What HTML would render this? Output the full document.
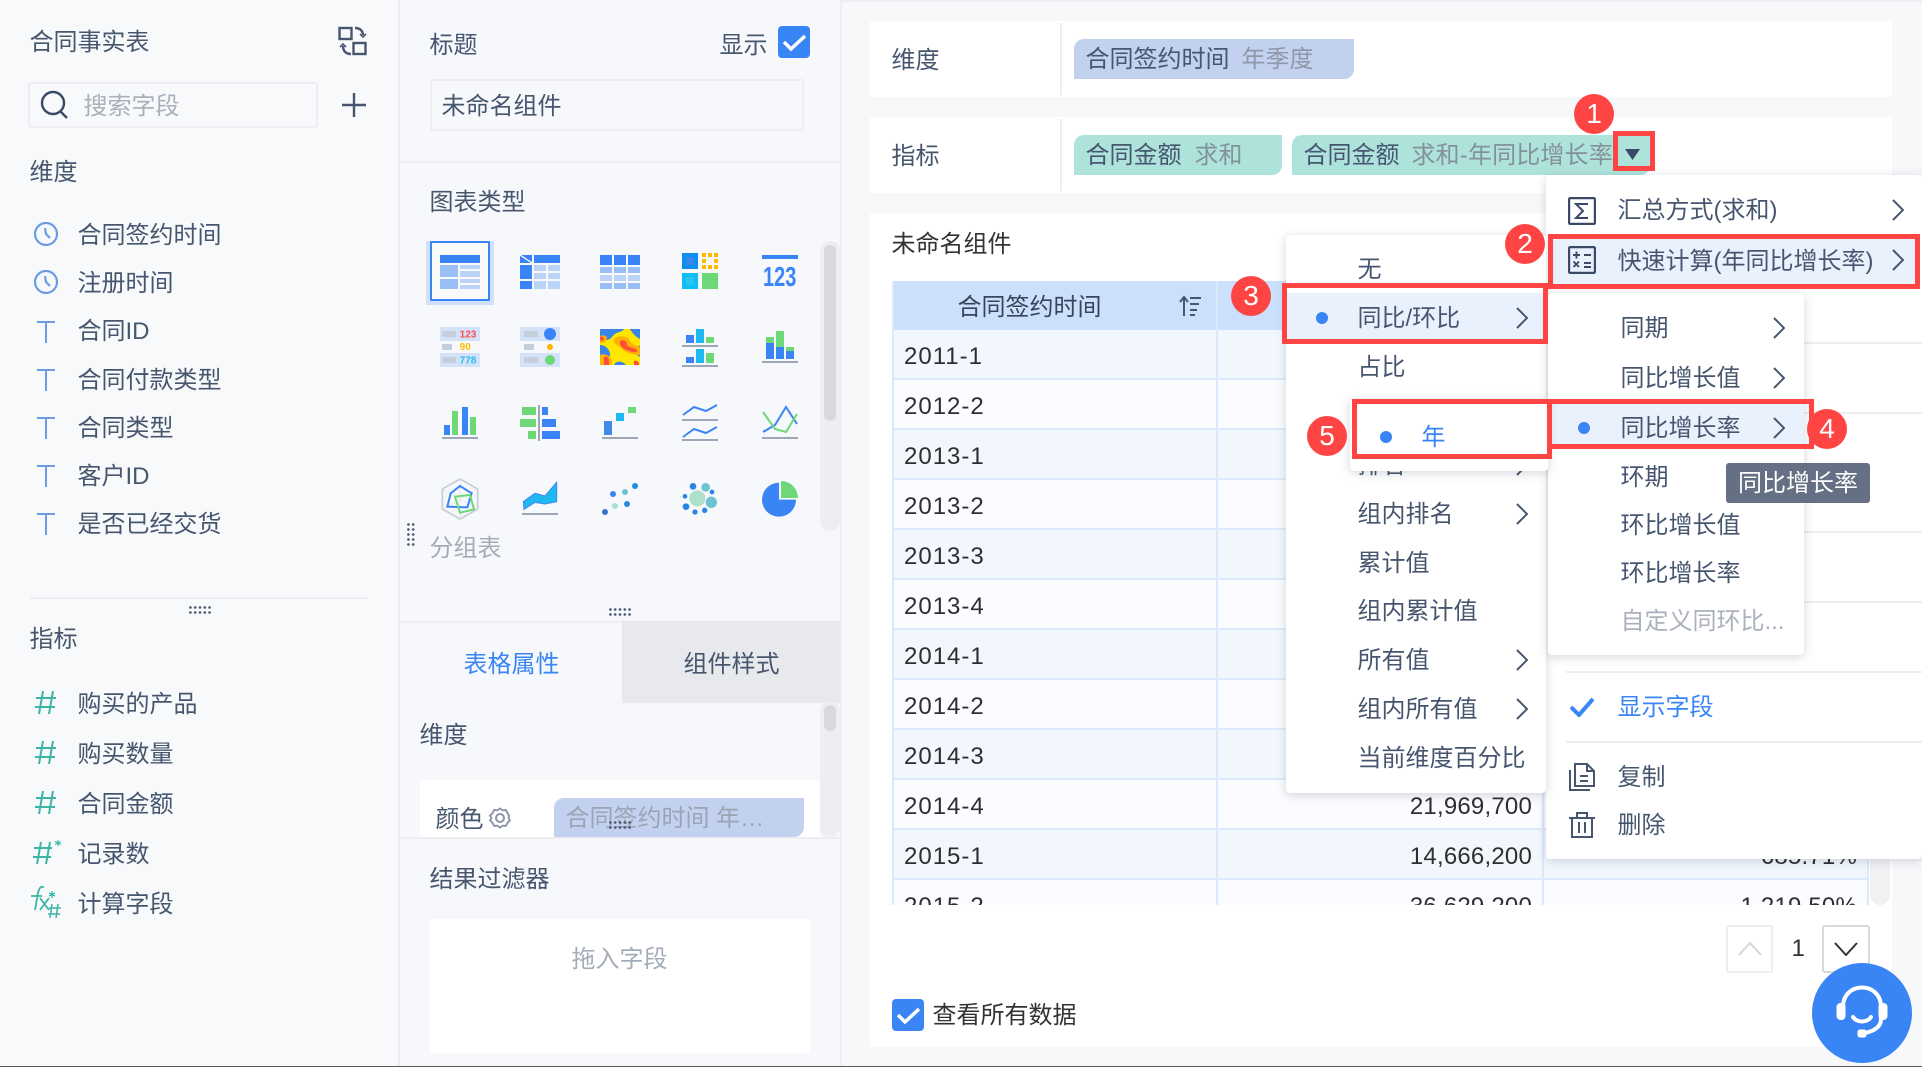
<!DOCTYPE html>
<html lang="zh"><head><meta charset="utf-8"><title>合同事实表</title>
<style>
html,body{margin:0;padding:0;width:1922px;height:1067px;overflow:hidden;background:#f7f8fa}
body{position:relative;font-family:"Liberation Sans","Noto Sans CJK SC",sans-serif;font-size:24px;color:#47566f}
.a,.t,svg.i{position:absolute}
.t{line-height:34px;white-space:nowrap;font-size:24px;margin:2px 0 0 -.5px}
.t.m{margin-top:1px}
.w{background:#fff}
.menu{position:absolute;background:#fff;border-radius:4px;box-shadow:0 2px 10px rgba(60,70,90,.22)}
.hl{position:absolute;background:#e9f1fd}
.rb{position:absolute;box-sizing:border-box;border:5px solid #f44}
.c{position:absolute;width:40px;height:40px;border-radius:50%;background:#f44;color:#fff;text-align:center;line-height:40px;font-size:28px}
.p{position:absolute;height:40px;border-radius:10px 0 10px 0}
.d{color:#8f97a8}
.sep{position:absolute;background:#eceef1}
.dots{position:absolute;background:radial-gradient(circle,#4c5a72 1.15px,transparent 1.5px) 0 0/4.8px 5px}
svg.ch{position:absolute;fill:none;stroke:#47566f;stroke-width:2}
.r{position:absolute;left:0;width:977px;height:50px;box-sizing:border-box;border-bottom:2px solid #dce9fc;color:#2e2e2e}
.r span{position:absolute;top:10px;line-height:34px;white-space:nowrap}
.r .n{left:12px;letter-spacing:1px}
.r .v{right:337px;letter-spacing:.2px}
.r .u{right:12px;letter-spacing:.2px}
</style></head><body>

<!-- page frame -->
<div class="sep" style="left:0;top:0;width:1922px;height:2px"></div>
<div class="a" style="left:0;top:0;width:398px;height:1067px;background:#f8f9fb"></div>
<div class="a" style="left:400px;top:0;width:440px;height:1067px;background:#f7f8fb"></div>
<div class="sep" style="left:398px;top:0;width:2px;height:1067px"></div>
<div class="sep" style="left:840px;top:0;width:2px;height:1067px"></div>

<!-- left panel -->
<div class="t" style="left:30px;top:24px">合同事实表</div>
<svg class="i" style="left:336px;top:25px" width="32" height="32" fill="none" stroke="#47566f" stroke-width="2.4"><rect x="3.500" y="3" width="12" height="11"/><rect x="17.500" y="18" width="12" height="11"/><path d="M19 3c5 0 8 3 8 7M15 29c-5 0-8-3-8-8"/><path d="M24 9l3 3 3-3M4 22l3-3 3 3" stroke-width="1.600"/></svg>
<div class="a" style="left:28px;top:82px;width:290px;height:46px;box-sizing:border-box;border:2px solid #eceef1;border-radius:3px"></div>
<svg class="i" style="left:38px;top:88px" width="32" height="34" fill="none" stroke="#3a4a66" stroke-width="2.400"><circle cx="15" cy="15" r="11"/><path d="M23 24l6 6"/></svg>
<div class="t" style="left:84px;top:88px;color:#a9b0bb">搜索字段</div>
<svg class="i" style="left:342px;top:93px" width="24" height="24" stroke="#47566f" stroke-width="2.400"><path d="M0 12H24M12 0V24"/></svg>
<div class="t" style="left:30px;top:154px">维度</div>

<svg class="i" style="left:33px;top:221px" width="26" height="26" fill="none" stroke="#6b9be0" stroke-width="2.200"><circle cx="13" cy="13" r="11"/><path d="M12 7l1 6 4 4"/></svg>
<div class="t" style="left:78px;top:217px">合同签约时间</div>
<svg class="i" style="left:33px;top:269px" width="26" height="26" fill="none" stroke="#6b9be0" stroke-width="2.200"><circle cx="13" cy="13" r="11"/><path d="M12 7l1 6 4 4"/></svg>
<div class="t" style="left:78px;top:265px">注册时间</div>
<svg class="i" style="left:37px;top:321px" width="18" height="22" stroke="#6b9be0" stroke-width="2" fill="none"><path d="M0 1H18M9 1V22"/></svg>
<div class="t" style="left:78px;top:313px">合同ID</div>
<svg class="i" style="left:37px;top:369px" width="18" height="22" stroke="#6b9be0" stroke-width="2" fill="none"><path d="M0 1H18M9 1V22"/></svg>
<div class="t" style="left:78px;top:362px">合同付款类型</div>
<svg class="i" style="left:37px;top:417px" width="18" height="22" stroke="#6b9be0" stroke-width="2" fill="none"><path d="M0 1H18M9 1V22"/></svg>
<div class="t" style="left:78px;top:410px">合同类型</div>
<svg class="i" style="left:37px;top:465px" width="18" height="22" stroke="#6b9be0" stroke-width="2" fill="none"><path d="M0 1H18M9 1V22"/></svg>
<div class="t" style="left:78px;top:458px">客户ID</div>
<svg class="i" style="left:37px;top:513px" width="18" height="22" stroke="#6b9be0" stroke-width="2" fill="none"><path d="M0 1H18M9 1V22"/></svg>
<div class="t" style="left:78px;top:506px">是否已经交货</div>

<div class="sep" style="left:30px;top:597px;width:338px;height:2px"></div>
<div class="dots" style="left:188px;top:605px;width:24px;height:10px"></div>
<div class="t" style="left:30px;top:621px">指标</div>

<svg class="i" style="left:35px;top:691px" width="21" height="23" fill="none" stroke="#3cb5a6" stroke-width="2"><path d="M8 0L4 23M18 0L14 23M1 7H21M0 16H20"/></svg>
<div class="t" style="left:78px;top:686px">购买的产品</div>
<svg class="i" style="left:35px;top:741px" width="21" height="23" fill="none" stroke="#3cb5a6" stroke-width="2"><path d="M8 0L4 23M18 0L14 23M1 7H21M0 16H20"/></svg>
<div class="t" style="left:78px;top:736px">购买数量</div>
<svg class="i" style="left:35px;top:791px" width="21" height="23" fill="none" stroke="#3cb5a6" stroke-width="2"><path d="M8 0L4 23M18 0L14 23M1 7H21M0 16H20"/></svg>
<div class="t" style="left:78px;top:786px">合同金额</div>
<svg class="i" style="left:33px;top:839px" width="30" height="25" fill="none" stroke="#3cb5a6" stroke-width="2"><path d="M8 3L4 25M17 3L13 25M1 9H19M0 18H18"/><path d="M25 1v6M22 2.500l6 3M28 2.500l-6 3" stroke-width="1.200"/></svg>
<div class="t" style="left:78px;top:836px">记录数</div>
<svg class="i" style="left:30px;top:886px" width="34" height="32" fill="none" stroke="#3cb5a6" stroke-width="1.800"><path d="M14 1c-4-1-5 2-6 6L5 24M1 10H12M10 12l9 12M19 12L10 24"/><path d="M22 18L20 32M28 18L26 32M19 22H31M18 28H30" stroke-width="1.500"/><path d="M22 5v7M19 7l6 3M25 7l-6 3" stroke-width="1.300"/></svg>
<div class="t" style="left:78px;top:886px">计算字段</div>

<div class="dots" style="left:406px;top:522px;width:10px;height:24px"></div>

<!-- middle panel -->
<div class="t" style="left:430px;top:27px">标题</div>
<div class="t" style="left:720px;top:27px">显示</div>
<div class="a" style="left:778px;top:26px;width:32px;height:32px;background:#3a85f5;border-radius:4px"></div>
<svg class="i" style="left:778px;top:26px" width="32" height="32" fill="none" stroke="#fff" stroke-width="3.500"><path d="M6 16l7 7L27 10"/></svg>
<div class="a" style="left:430px;top:79px;width:374px;height:52px;box-sizing:border-box;border:2px solid #eceef1"></div>
<div class="t" style="left:442px;top:88px">未命名组件</div>
<div class="sep" style="left:400px;top:161px;width:440px;height:2px"></div>
<div class="t" style="left:430px;top:184px">图表类型</div>

<svg class="i" style="left:420px;top:230px" width="430" height="400" viewBox="0 0 1290 1200">
<rect x="1200" y="33" width="60" height="870" rx="30" fill="#eceef1"/><rect x="1212" y="45" width="36" height="528" rx="18" fill="#d7d9de"/>
<rect x="18" y="33" width="204" height="192" fill="#d0e0f8"/><rect x="33" y="36" width="174" height="174" fill="#f8f9fb" stroke="#3a85f5" stroke-width="6"/>
<g fill="#3a85f5">
<rect x="60" y="75" width="120" height="24"/>
<rect x="342" y="75" width="78" height="24"/><rect x="300" y="75" width="36" height="24"/><rect x="300" y="105" width="36" height="42"/><rect x="300" y="153" width="36" height="24"/>
<rect x="540" y="75" width="36" height="30"/><rect x="582" y="75" width="36" height="30"/><rect x="624" y="75" width="36" height="30"/>
<rect x="1026" y="75" width="108" height="12"/>
</g>
<path d="M300 75L336 99" stroke="#fff" stroke-width="4"/>
<g fill="#98bef5">
<rect x="60" y="105" width="54" height="36"/><rect x="60" y="147" width="54" height="30"/>
<rect x="540" y="111" width="36" height="18"/><rect x="582" y="111" width="36" height="18"/><rect x="624" y="111" width="36" height="18"/>
<rect x="540" y="159" width="36" height="18"/><rect x="582" y="159" width="36" height="18"/><rect x="624" y="159" width="36" height="18"/>
</g>
<g fill="#bbd3f9">
<rect x="120" y="105" width="60" height="12"/><rect x="120" y="123" width="60" height="18"/><rect x="120" y="147" width="60" height="12"/><rect x="120" y="165" width="60" height="12"/>
<rect x="342" y="105" width="36" height="18"/><rect x="384" y="105" width="36" height="18"/><rect x="342" y="129" width="36" height="18"/><rect x="384" y="129" width="36" height="18"/><rect x="342" y="153" width="36" height="24"/><rect x="384" y="153" width="36" height="24"/>
<rect x="540" y="135" width="36" height="18"/><rect x="582" y="135" width="36" height="18"/><rect x="624" y="135" width="36" height="18"/>
</g>
<rect x="786" y="69" width="48" height="48" fill="#0a8fee"/><rect x="798" y="81" width="24" height="24" fill="#3a85e8"/>
<rect x="786" y="129" width="48" height="48" fill="#0fbef5"/><rect x="798" y="141" width="24" height="24" fill="#2ac4f2"/>
<rect x="846" y="129" width="48" height="48" fill="#6dd878"/>
<g fill="#ffbb00"><rect x="846" y="69" width="12" height="12"/><rect x="864" y="69" width="12" height="12"/><rect x="882" y="69" width="12" height="12"/><rect x="846" y="87" width="12" height="12"/><rect x="882" y="87" width="12" height="12"/><rect x="846" y="105" width="12" height="12"/><rect x="864" y="105" width="12" height="12"/><rect x="882" y="105" width="12" height="12"/></g>
<text x="1029" y="168" font-size="84" font-weight="700" fill="#3a85f5" textLength="100" lengthAdjust="spacingAndGlyphs" font-family="Liberation Sans,sans-serif">123</text>

<rect x="60" y="291" width="120" height="42" fill="#d3e2f9"/><rect x="60" y="369" width="120" height="42" fill="#d3e2f9"/>
<g fill="#c5cedb"><rect x="66" y="303" width="42" height="18"/><rect x="66" y="342" width="30" height="18"/><rect x="66" y="381" width="42" height="18"/></g>
<g font-size="30" font-weight="700" font-family="Liberation Sans,sans-serif"><text x="119" y="322" fill="#ff4d4d">123</text><text x="119" y="360" fill="#ffc000">90</text><text x="119" y="400" fill="#2bbcf0">778</text></g>
<rect x="300" y="291" width="120" height="42" fill="#d3e2f9"/><rect x="300" y="369" width="120" height="42" fill="#d3e2f9"/>
<g fill="#c5cedb"><rect x="312" y="303" width="42" height="18"/><rect x="312" y="342" width="30" height="18"/><rect x="312" y="381" width="42" height="18"/></g>
<circle cx="390" cy="312" r="18" fill="#3a85f5"/><circle cx="390" cy="351" r="9" fill="#ffb400"/><circle cx="390" cy="390" r="15" fill="#6dd878"/>

<rect x="540" y="297" width="120" height="108" fill="#ffe600"/>
<path d="M540 297h72c-6 12-24 6-36 24-10 12-24 12-36 0zM630 297h30v30c-12-6-24-18-30-30zM660 345v36c-6-6-24-12-30-24 12 0 24-6 30-12zM540 345c12 0 24 6 30 24 0 12-6 24-12 36h-18zM582 405c6-12 18-12 30-6l6 6zM618 330c-6 12-6 18 6 30 6-12 6-24-6-30z" fill="#3a85e8"/>
<path d="M582 327c12-12 42-12 48 6 6 12 24 12 30 18v24c-18 0-42-6-54-18-12-12-30-18-24-30zM540 375c12-6 30 0 36 18 0 6 0 12-3 12h-33zM540 318c6-3 18-3 21 6 0 6-9 18-21 15z" fill="#ffb000"/>
<path d="M600 333c12-6 24 3 21 12 6 9 24 9 30 15 3 6-6 9-12 6-18-3-42-12-39-33zM552 381c6-3 15 0 15 12v12h-15zM540 321c3-3 15 0 12 6 0 6-9 6-12 3zM642 393c6-3 15 0 15 12h-15z" fill="#ff4d3d"/>

<rect x="798" y="315" width="24" height="24" fill="#3a85f5"/><rect x="828" y="297" width="24" height="42" fill="#1fb9f2"/><rect x="858" y="321" width="24" height="18" fill="#6dd878"/>
<rect x="798" y="381" width="24" height="18" fill="#3a85f5"/><rect x="828" y="357" width="24" height="42" fill="#1fb9f2"/><rect x="858" y="369" width="24" height="30" fill="#6dd878"/>
<rect x="786" y="345" width="108" height="6" fill="#9ea7b7"/><rect x="786" y="405" width="108" height="6" fill="#9ea7b7"/>

<rect x="1038" y="339" width="24" height="48" fill="#3a85f5"/><rect x="1038" y="321" width="24" height="18" fill="#6dd878"/>
<rect x="1068" y="351" width="24" height="36" fill="#3a85f5"/><rect x="1068" y="303" width="24" height="48" fill="#6dd878"/>
<rect x="1098" y="363" width="24" height="24" fill="#3a85f5"/><rect x="1098" y="351" width="24" height="12" fill="#6dd878"/>
<rect x="1026" y="393" width="108" height="6" fill="#9ea7b7"/>

<rect x="72" y="585" width="18" height="30" fill="#3a85f5"/><rect x="96" y="543" width="18" height="72" fill="#6dd878"/><rect x="126" y="531" width="18" height="84" fill="#3a85f5"/><rect x="150" y="561" width="18" height="54" fill="#6dd878"/>
<rect x="66" y="621" width="108" height="6" fill="#9ea7b7"/>

<rect x="354" y="525" width="6" height="108" fill="#9ea7b7"/>
<g fill="#6dd878"><rect x="306" y="531" width="42" height="24"/><rect x="300" y="567" width="48" height="24"/><rect x="324" y="603" width="24" height="24"/></g>
<g fill="#3a85f5"><rect x="366" y="531" width="18" height="24"/><rect x="366" y="567" width="42" height="24"/><rect x="366" y="603" width="54" height="24"/></g>

<rect x="552" y="573" width="24" height="42" fill="#3f8be8"/><rect x="588" y="549" width="24" height="24" fill="#1fb9f2"/><rect x="624" y="531" width="24" height="18" fill="#6dd878"/>
<rect x="546" y="621" width="108" height="6" fill="#9ea7b7"/>

<g fill="none" stroke="#3a85f5" stroke-width="6"><path d="M789 555L822 531L858 543L891 525"/><path d="M789 621L822 597L858 609L891 591"/></g>
<rect x="786" y="567" width="108" height="6" fill="#9ea7b7"/><rect x="786" y="627" width="108" height="6" fill="#9ea7b7"/>

<path d="M1029 606L1065 585L1098 531L1131 582" fill="none" stroke="#3a85f5" stroke-width="6"/>
<path d="M1029 546L1065 597L1098 606L1131 552" fill="none" stroke="#6dd878" stroke-width="6"/>
<rect x="1026" y="621" width="108" height="6" fill="#9ea7b7"/>

<path d="M120 747L173 777V837L120 867L67 837V777Z" fill="none" stroke="#c8ccd4" stroke-width="5"/>
<path d="M120 747V867M67 777L173 837M173 777L67 837" stroke="#e0e2e6" stroke-width="2"/>
<path d="M120 768L155 790L142 832L82 830L92 790Z" fill="none" stroke="#3a85f5" stroke-width="6"/>
<path d="M105 800L150 795L162 838L120 848Z" fill="none" stroke="#6dd878" stroke-width="6"/>

<path d="M310 815L345 790L375 798L410 757V815L375 822L345 817L312 838Z" fill="#1fb9f2" stroke="#3a85f5" stroke-width="3"/>
<rect x="306" y="849" width="108" height="6" fill="#9ea7b7"/>

<circle cx="555" cy="846" r="9" fill="#3f6fc4"/><circle cx="585" cy="828" r="9" fill="#a9e0cb"/><circle cx="621" cy="822" r="9" fill="#2a85e0"/><circle cx="579" cy="792" r="9" fill="#3a85f5"/><circle cx="615" cy="786" r="9" fill="#6cc4d2"/><circle cx="645" cy="768" r="9" fill="#1a90e0"/>

<circle cx="832" cy="805" r="24" fill="#aee0ca"/><circle cx="874" cy="817" r="17" fill="#6cc4d2"/><circle cx="857" cy="772" r="13" fill="#6cc4d2"/><circle cx="819" cy="769" r="10" fill="#2a85e0"/><circle cx="876" cy="786" r="7" fill="#2a85e0"/><circle cx="795" cy="799" r="7" fill="#2a85e0"/><circle cx="798" cy="830" r="10" fill="#2a85e0"/><circle cx="825" cy="846" r="8" fill="#2a85e0"/><circle cx="854" cy="841" r="8" fill="#2a85e0"/>

<path d="M1077 758A51 51 0 1 0 1128 809H1077Z" fill="#3a85f5"/><path d="M1083 753A51 51 0 0 1 1134 804H1083Z" fill="#6dd878"/>
</svg>

<div class="t" style="left:430px;top:530px;color:#a5acb9">分组表</div>
<div class="dots" style="left:608px;top:607px;width:24px;height:10px"></div>

<div class="sep" style="left:400px;top:621px;width:222px;height:2px"></div>
<div class="a" style="left:622px;top:621px;width:218px;height:82px;background:#e8e9ed"></div>
<div class="t" style="left:464px;top:646px;color:#3a85f5">表格属性</div>
<div class="t" style="left:684px;top:646px">组件样式</div>

<div class="a" style="left:820px;top:701px;width:20px;height:136px;background:#eceef1;border-radius:10px"></div>
<div class="a" style="left:824px;top:705px;width:12px;height:26px;background:#d7d9de;border-radius:6px"></div>
<div class="t" style="left:420px;top:717px">维度</div>
<div class="a w" style="left:420px;top:780px;width:400px;height:57px"></div>
<div class="t" style="left:436px;top:801px">颜色</div>
<svg class="i" style="left:488px;top:806px" width="24" height="24" fill="none" stroke="#8c95a5" stroke-width="2"><path d="M12 2l3 2 3-.5 2 3.500 1.500 2.500L21 12l1.500 2.500L20 17l-2 3.500-3-.5-3 2-3-2-3 .5L4 17l-2.500-2.500L3 12 1.500 9.500 4 7l2-3.500 3 .5z" transform="translate(0.600 0.600) scale(.95)"/><circle cx="12" cy="12" r="4"/></svg>
<div class="p" style="left:554px;top:798px;width:250px;height:39px;background:#c2d1ef"></div>
<div class="t" style="left:566px;top:800px;color:#9ba4b3">合同签约时间 年…</div>
<div class="dots" style="left:608px;top:820px;width:24px;height:10px"></div>
<div class="sep" style="left:400px;top:837px;width:440px;height:2px"></div>
<div class="t" style="left:430px;top:861px">结果过滤器</div>
<div class="a w" style="left:430px;top:919px;width:380px;height:134px"></div>
<div class="t" style="left:572px;top:941px;color:#a5acb9">拖入字段</div>

<!-- right: cards -->
<div class="a w" style="left:870px;top:21px;width:1022px;height:76px"></div>
<div class="sep" style="left:1060px;top:23px;width:2px;height:72px"></div>
<div class="t" style="left:892px;top:42px">维度</div>
<div class="p" style="left:1074px;top:39px;width:280px;background:#c2d1ef"></div>
<div class="t" style="left:1086px;top:41px">合同签约时间</div>
<div class="t d" style="left:1242px;top:41px">年季度</div>

<div class="a w" style="left:870px;top:117px;width:1022px;height:76px"></div>
<div class="sep" style="left:1060px;top:119px;width:2px;height:72px"></div>
<div class="t" style="left:892px;top:138px">指标</div>
<div class="p" style="left:1074px;top:135px;width:208px;background:#aee3dc"></div>
<div class="t" style="left:1086px;top:137px">合同金额</div>
<div class="t" style="left:1195px;top:137px;color:#839199">求和</div>
<div class="p" style="left:1292px;top:135px;width:358px;background:#aee3dc"></div>
<div class="t" style="left:1304px;top:137px">合同金额</div>
<div class="t" style="left:1412px;top:137px;color:#839199;letter-spacing:.15px">求和-年同比增长率</div>

<div class="a w" style="left:870px;top:213px;width:1022px;height:834px"></div>
<div class="t" style="left:892px;top:226px;color:#333">未命名组件</div>

<!-- table -->
<div class="a" style="left:1870px;top:281px;width:20px;height:624px;background:#f0f1f3;border-radius:0 0 10px 10px"></div>
<div class="a" style="left:892px;top:281px;width:977px;height:624px;overflow:hidden">
<div class="a" style="left:0;top:0;width:977px;height:49px;background:#cbe0fd"></div>
<div class="t" style="left:66px;top:8px;color:#3a4458">合同签约时间</div>
<svg class="i" style="left:286px;top:14px" width="24" height="22" fill="none" stroke="#47566f" stroke-width="2"><path d="M6 21V3M2 7l4-5 4 5" /><path d="M12 3H23M12 9H21M12 15H19M12 20H17"/></svg>
<div class="r" style="top:49px;background:#f2f7fe"><span class="n">2011-1</span></div>
<div class="r" style="top:99px;background:#fbfcff"><span class="n">2012-2</span></div>
<div class="r" style="top:149px;background:#f2f7fe"><span class="n">2013-1</span></div>
<div class="r" style="top:199px;background:#fbfcff"><span class="n">2013-2</span></div>
<div class="r" style="top:249px;background:#f2f7fe"><span class="n">2013-3</span></div>
<div class="r" style="top:299px;background:#fbfcff"><span class="n">2013-4</span></div>
<div class="r" style="top:349px;background:#f2f7fe"><span class="n">2014-1</span></div>
<div class="r" style="top:399px;background:#fbfcff"><span class="n">2014-2</span></div>
<div class="r" style="top:449px;background:#f2f7fe"><span class="n">2014-3</span></div>
<div class="r" style="top:499px;background:#fbfcff"><span class="n">2014-4</span><span class="v">21,969,700</span></div>
<div class="r" style="top:549px;background:#f2f7fe"><span class="n">2015-1</span><span class="v">14,666,200</span><span class="u">685.71%</span></div>
<div class="r" style="top:599px;background:#fbfcff"><span class="n">2015-2</span><span class="v">36,629,200</span><span class="u">1,219.50%</span></div>
<div class="a" style="left:0;top:0;width:2px;height:624px;background:#dce9fc"></div>
<div class="a" style="left:324px;top:0;width:2px;height:624px;background:#dce9fc"></div>
<div class="a" style="left:650px;top:0;width:2px;height:624px;background:#dce9fc"></div>
<div class="a" style="left:975px;top:0;width:2px;height:624px;background:#dce9fc"></div>
</div>

<!-- pagination -->
<div class="a" style="left:1726px;top:925px;width:47px;height:48px;box-sizing:border-box;border:2px solid #eceef1;border-radius:3px"></div>
<svg class="i" style="left:1738px;top:942px" width="24" height="14" fill="none" stroke="#d3d6da" stroke-width="2"><path d="M1 13L12 1L23 13"/></svg>
<div class="t" style="left:1792px;top:930px;color:#333">1</div>
<div class="a" style="left:1822px;top:925px;width:48px;height:48px;box-sizing:border-box;border:2px solid #d7d9dc;border-radius:3px"></div>
<svg class="i" style="left:1834px;top:942px" width="24" height="14" fill="none" stroke="#333" stroke-width="2"><path d="M1 1L12 13L23 1"/></svg>

<div class="a" style="left:892px;top:999px;width:32px;height:32px;background:#3a85f5;border-radius:4px"></div>
<svg class="i" style="left:892px;top:999px" width="32" height="32" fill="none" stroke="#fff" stroke-width="3.500"><path d="M6 16l7 7L27 10"/></svg>
<div class="t" style="left:933px;top:997px;color:#333">查看所有数据</div>

<!-- main menu -->
<div class="menu" style="left:1546px;top:175px;width:376px;height:684px"></div>
<div class="hl" style="left:1553px;top:239px;width:362px;height:45px"></div>
<svg class="i" style="left:1568px;top:197px" width="28" height="28" fill="none" stroke="#3a4a66" stroke-width="2.200"><rect x="1.100" y="1.100" width="25.800" height="25.800" rx="1"/><path d="M20 7H8L15 14L8 21H20" stroke-width="2"/></svg>
<div class="t m" style="left:1618px;top:193px">汇总方式(求和)</div>
<svg class="ch" style="left:1892px;top:199px" width="12" height="22"><path d="M1 1L11 11L1 21"/></svg>
<svg class="i" style="left:1568px;top:246px" width="28" height="28" fill="none" stroke="#3a4a66" stroke-width="2.200"><rect x="1.100" y="1.100" width="25.800" height="25.800" rx="1"/><path d="M5 9H12M8.500 5.500V12.500M16 9H23M16 17H23M16 21H23M5.500 15.500L11 21M11 15.500L5.500 21" stroke-width="1.900"/></svg>
<div class="t m" style="left:1618px;top:244px">快速计算(年同比增长率)</div>
<svg class="ch" style="left:1892px;top:249px" width="12" height="22"><path d="M1 1L11 11L1 21"/></svg>
<div class="sep" style="left:1804px;top:342px;width:118px;height:2px"></div>
<div class="sep" style="left:1804px;top:412px;width:118px;height:2px"></div>
<div class="sep" style="left:1804px;top:531px;width:118px;height:2px"></div>
<div class="sep" style="left:1804px;top:601px;width:118px;height:2px"></div>
<div class="sep" style="left:1566px;top:671px;width:356px;height:2px"></div>
<svg class="i" style="left:1570px;top:697px" width="24" height="20" fill="none" stroke="#3a85f5" stroke-width="4"><path d="M1 10l8 8L23 2"/></svg>
<div class="t m" style="left:1618px;top:690px;color:#3a85f5">显示字段</div>
<div class="sep" style="left:1566px;top:741px;width:356px;height:2px"></div>
<svg class="i" style="left:1568px;top:763px" width="28" height="28" fill="none" stroke="#47566f" stroke-width="2"><path d="M7 1H19L26 8V23H7Z"/><path d="M19 1V8H26M12 13H20M12 18H20"/><path d="M2 7V27H22"/></svg>
<div class="t m" style="left:1618px;top:760px">复制</div>
<svg class="i" style="left:1568px;top:811px" width="28" height="28" fill="none" stroke="#47566f" stroke-width="2"><path d="M1 7H27M9 7V2H19V7M4 7V26H24V7M11 11V22M17 11V22"/></svg>
<div class="t m" style="left:1618px;top:808px">删除</div>

<!-- left submenu -->
<div class="menu" style="left:1286px;top:235px;width:260px;height:558px"></div>
<div class="hl" style="left:1286px;top:293px;width:260px;height:46px"></div>
<div class="t m" style="left:1358px;top:252px">无</div>
<div class="a" style="left:1316px;top:312px;width:12px;height:12px;border-radius:50%;background:#3a85f5"></div>
<div class="t m" style="left:1358px;top:301px">同比/环比</div>
<svg class="ch" style="left:1516px;top:307px" width="12" height="22"><path d="M1 1L11 11L1 21"/></svg>
<div class="t m" style="left:1358px;top:350px">占比</div>
<div class="t m" style="left:1358px;top:448px">排名</div>
<svg class="ch" style="left:1516px;top:454px" width="12" height="22"><path d="M1 1L11 11L1 21"/></svg>
<div class="t m" style="left:1358px;top:497px">组内排名</div>
<svg class="ch" style="left:1516px;top:503px" width="12" height="22"><path d="M1 1L11 11L1 21"/></svg>
<div class="t m" style="left:1358px;top:546px">累计值</div>
<div class="t m" style="left:1358px;top:594px">组内累计值</div>
<div class="t m" style="left:1358px;top:643px">所有值</div>
<svg class="ch" style="left:1516px;top:649px" width="12" height="22"><path d="M1 1L11 11L1 21"/></svg>
<div class="t m" style="left:1358px;top:692px">组内所有值</div>
<svg class="ch" style="left:1516px;top:698px" width="12" height="22"><path d="M1 1L11 11L1 21"/></svg>
<div class="t m" style="left:1358px;top:741px">当前维度百分比</div>

<!-- third menu -->
<div class="menu" style="left:1548px;top:293px;width:256px;height:362px"></div>
<div class="hl" style="left:1552px;top:404px;width:252px;height:41px"></div>
<div class="t m" style="left:1621px;top:311px">同期</div>
<svg class="ch" style="left:1773px;top:317px" width="12" height="22"><path d="M1 1L11 11L1 21"/></svg>
<div class="t m" style="left:1621px;top:361px">同比增长值</div>
<svg class="ch" style="left:1773px;top:367px" width="12" height="22"><path d="M1 1L11 11L1 21"/></svg>
<div class="a" style="left:1578px;top:422px;width:12px;height:12px;border-radius:50%;background:#3a85f5"></div>
<div class="t m" style="left:1621px;top:411px">同比增长率</div>
<svg class="ch" style="left:1773px;top:417px" width="12" height="22"><path d="M1 1L11 11L1 21"/></svg>
<div class="t m" style="left:1621px;top:460px">环期</div>
<div class="t m" style="left:1621px;top:508px">环比增长值</div>
<div class="t m" style="left:1621px;top:556px">环比增长率</div>
<div class="t m" style="left:1621px;top:604px;color:#aab1bc">自定义同环比...</div>

<!-- fourth menu -->
<div class="menu" style="left:1350px;top:399px;width:198px;height:72px"></div>
<div class="a" style="left:1380px;top:431px;width:12px;height:12px;border-radius:50%;background:#3a85f5"></div>
<div class="t m" style="left:1422px;top:420px;color:#3a85f5">年</div>

<!-- tooltip -->
<div class="a" style="left:1726px;top:463px;width:144px;height:40px;background:#667085;border-radius:3px;color:#fff;text-align:center;line-height:42px">同比增长率</div>

<!-- dropdown arrow & annotation boxes -->
<svg class="i" style="left:1625px;top:149px" width="15" height="11"><path d="M0 0H15L7.500 11Z" fill="#3a4a66"/></svg>
<div class="rb" style="left:1613px;top:131px;width:42px;height:40px"></div>
<div class="rb" style="left:1548px;top:234px;width:372px;height:55px"></div>
<div class="rb" style="left:1282px;top:283px;width:266px;height:61px"></div>
<div class="rb" style="left:1547px;top:399px;width:267px;height:50px"></div>
<div class="rb" style="left:1352px;top:399px;width:200px;height:60px"></div>

<div class="c" style="left:1574px;top:94px">1</div>
<div class="c" style="left:1505px;top:224px">2</div>
<div class="c" style="left:1231px;top:276px">3</div>
<div class="c" style="left:1807px;top:409px">4</div>
<div class="c" style="left:1307px;top:416px">5</div>

<!-- chat button -->
<div class="a" style="left:1812px;top:963px;width:100px;height:100px;border-radius:50%;background:#3a85f5"></div>
<svg class="i" style="left:1832px;top:983px" width="60" height="60" fill="none" stroke="#fff" stroke-width="4"><path d="M11 24C11 -2 49 -2 49 24V36C49 44 42 48 33 50"/><rect x="5.500" y="21" width="7" height="15" rx="3" fill="#fff" stroke-width="2"/><rect x="47.500" y="21" width="7" height="15" rx="3" fill="#fff" stroke-width="2"/><path d="M21 34C25 40 35 40 39 34" stroke-linecap="round"/><rect x="26" y="47" width="8" height="7" rx="2" fill="#fff" stroke-width="1"/></svg>

<div class="a" style="left:0;top:1066px;width:1922px;height:1px;background:#555"></div>
</body></html>
